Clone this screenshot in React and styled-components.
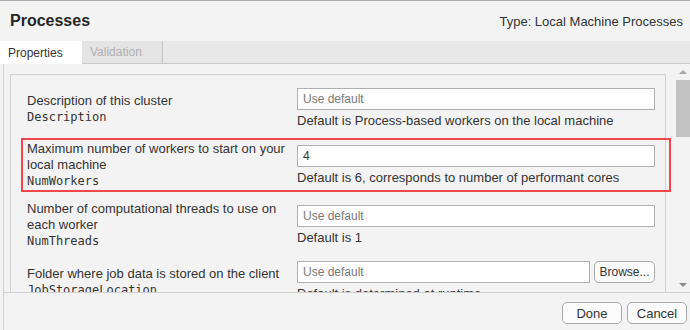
import React from 'react';
import styled, { createGlobalStyle } from 'styled-components';

const GlobalStyle = createGlobalStyle`
  html, body {
    margin: 0;
    padding: 0;
    background: #f3f3f3;
    overflow: hidden;
  }
  body {
    font-family: "Liberation Sans", Arial, sans-serif;
    color: #333;
  }
  * {
    box-sizing: border-box;
  }
`;

const Window = styled.div`
  display: flex;
  flex-direction: column;
  width: 690px;
  height: 330px;
  border-top: 1px solid #ababab;
  background: #f3f3f3;
`;

const Header = styled.header`
  flex: none;
  display: flex;
  align-items: center;
  justify-content: space-between;
  height: 40px;
  padding: 0 7px 0 10px;
`;

const Title = styled.h1`
  margin: 0;
  font-size: 16px;
  font-weight: bold;
  color: #262626;
`;

const TypeLabel = styled.span`
  font-size: 13px;
  color: #333;
`;

const TabBar = styled.div`
  flex: none;
  display: flex;
  height: 23px;
  background: #e8e8e8;
  border-bottom: 1px solid #c9c9c9;
`;

const Tab = styled.div`
  width: ${(p) => p.$w}px;
  display: flex;
  align-items: center;
  padding-left: 8px;
  font-size: 12px;
  background: ${(p) => (p.$active ? '#ffffff' : '#e4e4e4')};
  color: ${(p) => (p.$active ? '#333' : '#b0b0b0')};
  border-right: 1px solid ${(p) => (p.$active ? 'transparent' : '#c4c4c4')};
  margin-bottom: ${(p) => (p.$active ? '-1px' : '0')};
`;

const Frame = styled.div`
  flex: 1;
  min-height: 0;
  display: flex;
  flex-direction: column;
  margin-left: 3px;
  border-left: 1px solid #cfcfcf;
`;

const Body = styled.div`
  flex: 1;
  min-height: 0;
  display: flex;
  overflow: hidden;
`;

const Viewport = styled.div`
  flex: 1;
  min-width: 0;
  padding: 10px 0 0 6px;
`;

const Panel = styled.div`
  width: 656px;
  display: flex;
  flex-direction: column;
  gap: 6px;
  padding: 10px 0 24px;
  border: 1px solid #d2d2d2;
`;

const Row = styled.div`
  position: relative;
  z-index: 1;
  display: grid;
  grid-template-columns: 260px 358px;
  column-gap: 10px;
  align-items: center;
  margin: 0 -6px 0 10px;
  padding: 1px 14px 1px 4px;
  border: 2px solid ${(p) => (p.$highlight ? '#f2474a' : 'transparent')};
`;

const Label = styled.div`
  font-size: 13px;
  line-height: 16px;
  color: #333;
`;

const Code = styled.code`
  display: block;
  font-family: "DejaVu Sans Mono", "Liberation Mono", monospace;
  font-size: 12px;
  line-height: 16px;
  color: #333;
`;

const Field = styled.div`
  display: flex;
  flex-direction: column;
`;

const InputLine = styled.div`
  display: flex;
  gap: 4px;
`;

const Input = styled.input`
  flex: 1;
  min-width: 0;
  height: 22px;
  margin: 0;
  padding: 0 5px;
  border: 1px solid #b0b0b0;
  border-radius: 0;
  background: #fff;
  font-family: "Liberation Sans", Arial, sans-serif;
  font-size: 12px;
  color: #333;
  outline: none;

  &::placeholder {
    color: #7a7a7a;
  }
`;

const Help = styled.div`
  margin-top: 3px;
  font-size: 13px;
  line-height: 16px;
  color: #333;
`;

const Button = styled.button`
  flex: none;
  width: ${(p) => p.$w || 60}px;
  height: 22px;
  padding: 0;
  border: 1px solid #a9a9a9;
  border-radius: 5px;
  background: #fcfcfc;
  font-family: "Liberation Sans", Arial, sans-serif;
  font-size: ${(p) => p.$size || 13}px;
  color: #333;
`;

const Scrollbar = styled.div`
  flex: none;
  width: 24px;
  display: flex;
  flex-direction: column;
  padding-left: 10px;
`;

const Arrow = styled.div`
  height: 15px;
  display: flex;
  align-items: center;
  justify-content: center;

  &::before {
    content: '';
    border-left: 4px solid transparent;
    border-right: 4px solid transparent;
    ${(p) => (p.$down ? 'border-top: 4px solid #8c8c8c;' : 'border-bottom: 4px solid #a6a6a6;')}
  }
`;

const Thumb = styled.div`
  height: 57px;
  margin-top: 1px;
  background: #c2c2c2;
`;

const Track = styled.div`
  flex: 1;
`;

const Footer = styled.footer`
  flex: none;
  height: 38px;
  display: flex;
  justify-content: flex-end;
  align-items: flex-start;
  gap: 5px;
  padding: 9px 3px 0 0;
  border-top: 1px solid #d0d0d0;
`;

const rows = [
  {
    label: 'Description of this cluster',
    code: 'Description',
    help: 'Default is Process-based workers on the local machine',
  },
  {
    label: 'Maximum number of workers to start on your local machine',
    code: 'NumWorkers',
    value: '4',
    help: 'Default is 6, corresponds to number of performant cores',
    highlight: true,
  },
  {
    label: 'Number of computational threads to use on each worker',
    code: 'NumThreads',
    help: 'Default is 1',
  },
  {
    label: 'Folder where job data is stored on the client',
    code: 'JobStorageLocation',
    help: 'Default is determined at runtime',
    browse: true,
  },
];

export default function App() {
  return (
    <Window>
      <GlobalStyle />
      <Header>
        <Title>Processes</Title>
        <TypeLabel>Type: Local Machine Processes</TypeLabel>
      </Header>
      <TabBar>
        <Tab $w={82} $active>Properties</Tab>
        <Tab $w={81}>Validation</Tab>
      </TabBar>
      <Frame>
        <Body>
          <Viewport>
            <Panel>
              {rows.map((r) => (
                <Row key={r.code} $highlight={r.highlight}>
                  <Label>
                    {r.label}
                    <Code>{r.code}</Code>
                  </Label>
                  <Field>
                    <InputLine>
                      <Input placeholder="Use default" defaultValue={r.value || ''} />
                      {r.browse && <Button $w={61} $size={12}>Browse...</Button>}
                    </InputLine>
                    <Help>{r.help}</Help>
                  </Field>
                </Row>
              ))}
            </Panel>
          </Viewport>
          <Scrollbar>
            <Arrow />
            <Thumb />
            <Track />
            <Arrow $down />
          </Scrollbar>
        </Body>
        <Footer>
          <Button>Done</Button>
          <Button>Cancel</Button>
        </Footer>
      </Frame>
    </Window>
  );
}
